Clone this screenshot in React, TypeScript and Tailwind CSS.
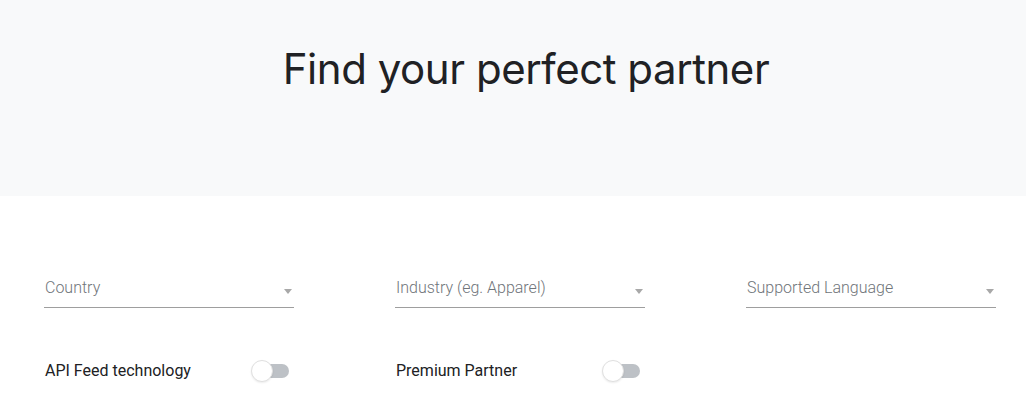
import React, { useState } from "react";

const Select = ({ label }: { label: string }) => (
  <div className="relative flex items-center border-b border-[#9e9e9e] pb-[7px] pl-px">
    <span className="text-base font-light leading-6 text-[#70757a]">{label}</span>
    <span className="absolute right-[2px] top-[13px] h-0 w-0 border-x-[4.5px] border-t-[5px] border-x-transparent border-t-[#a8a8a8]" />
  </div>
);

const Toggle = ({ label }: { label: string }) => {
  const [on, setOn] = useState(false);
  return (
    <div className="flex w-[245px] items-center justify-between pl-px">
      <span className="text-base leading-6 text-[#202124]">{label}</span>
      <button
        onClick={() => setOn(!on)}
        className="relative h-[14px] w-[34px] rounded-full bg-[#bdc1c6]"
      >
        <span
          className={`absolute -top-[4px] h-[22px] w-[22px] rounded-full border border-[#e0e0e0] bg-white shadow-[0_1px_2px_rgba(0,0,0,0.08)] ${
            on ? "left-[14px]" : "-left-[4px]"
          }`}
        />
      </button>
    </div>
  );
};

export default function App() {
  return (
    <div className="min-h-screen bg-white font-['Roboto',sans-serif]">
      {/* Hero */}
      <div className="flex h-[196px] justify-center bg-[#f8f9fa] pl-[26px] pt-[41px]">
        <h1 className="font-['Inter',sans-serif] text-[42px] font-normal leading-[56px] tracking-[-0.45px] text-[#202124]">
          Find your perfect partner
        </h1>
      </div>

      {/* Filters */}
      <div className="grid grid-cols-[250px_250px_250px] gap-x-[101px] px-[44px] pt-[80px]">
        <Select label="Country" />
        <Select label="Industry (eg. Apparel)" />
        <Select label="Supported Language" />
      </div>
      <div className="grid grid-cols-[250px_250px_250px] gap-x-[101px] px-[44px] pt-[51px]">
        <Toggle label="API Feed technology" />
        <Toggle label="Premium Partner" />
      </div>
    </div>
  );
}
